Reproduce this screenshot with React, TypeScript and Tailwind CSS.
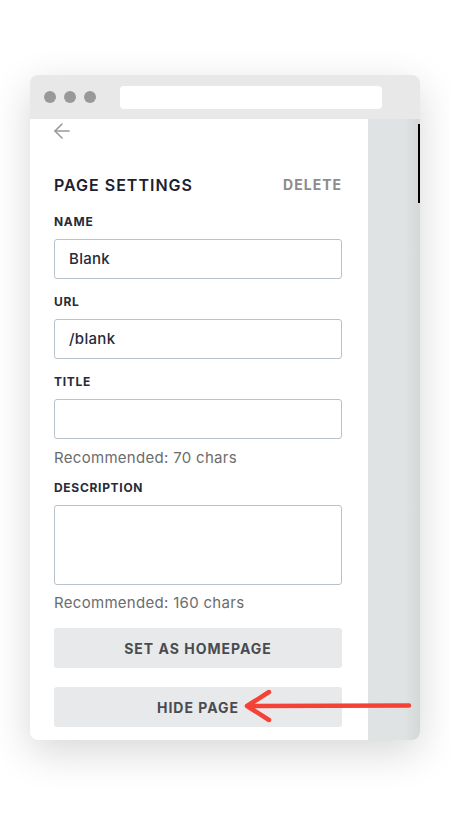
import { ArrowLeft } from "lucide-react";

const font = { fontFamily: "Inter, 'Noto Sans', sans-serif" };

function Field({ label, value, tall }: { label: string; value?: string; tall?: boolean }) {
  return (
    <div>
      <div className="text-[12px] leading-[16px] font-bold tracking-[0.7px] text-[#262b3a]">{label}</div>
      <div
        className={`mt-[9px] w-[288px] ${tall ? "h-[80px]" : "h-[40px]"} rounded-[3px] border border-[#b9c2cb] bg-white px-[14px] ${
          tall ? "" : "flex items-center"
        } text-[15px] font-medium tracking-[0.3px] text-[#262b3a]`}
      >
        {value}
      </div>
    </div>
  );
}

export default function App() {
  return (
    <div className="relative min-h-[815px] w-[450px] bg-white pt-[75px] pl-[30px]" style={font}>
      {/* Browser window */}
      <div className="w-[390px] overflow-hidden rounded-[8px] bg-white shadow-[0_12px_40px_rgba(0,0,0,0.16)]">
        {/* Top bar */}
        <div className="flex h-[44px] items-center bg-[#e8e8e8] px-[14px]">
          <div className="flex gap-[8px]">
            <span className="h-[12px] w-[12px] rounded-full bg-[#999]" />
            <span className="h-[12px] w-[12px] rounded-full bg-[#999]" />
            <span className="h-[12px] w-[12px] rounded-full bg-[#999]" />
          </div>
          <div className="ml-[24px] h-[23px] w-[262px] rounded-[4px] bg-white" />
        </div>

        <div className="flex">
          {/* Settings panel */}
          <div className="w-[338px] pl-[24px] pb-[13px]">
            <div className="-ml-[4px] h-[24px]">
              <ArrowLeft size={24} strokeWidth={1.6} className="text-[#999]" />
            </div>

            <div className="mt-[31px] flex w-[288px] items-center justify-between">
              <h1 className="text-[16px] leading-[20px] font-semibold tracking-[1px] text-[#1d2030]">PAGE SETTINGS</h1>
              <span className="text-[14px] font-bold tracking-[1px] text-[#8c8c8c]">DELETE</span>
            </div>

            <div className="mt-[19px]">
              <Field label="NAME" value="Blank" />
            </div>
            <div className="mt-[15px]">
              <Field label="URL" value="/blank" />
            </div>
            <div className="mt-[15px]">
              <Field label="TITLE" />
            </div>
            <p className="mt-[9px] text-[15px] leading-[20px] tracking-[0.3px] text-[#6c6c6c]">Recommended: 70 chars</p>
            <div className="mt-[12px]">
              <Field label="DESCRIPTION" tall />
            </div>
            <p className="mt-[8px] text-[15px] leading-[20px] tracking-[0.3px] text-[#6c6c6c]">Recommended: 160 chars</p>

            <button className="mt-[15px] flex h-[40px] w-[288px] items-center justify-center rounded-[3px] bg-[#e8e9ea] text-[14px] font-bold tracking-[1px] text-[#494b50]">
              SET AS HOMEPAGE
            </button>
            <button className="mt-[19px] flex h-[40px] w-[288px] items-center justify-center rounded-[3px] bg-[#e8e9ea] text-[14px] font-bold tracking-[1px] text-[#494b50]">
              HIDE PAGE
            </button>
          </div>

          {/* Canvas strip */}
          <div className="flex flex-1 bg-gradient-to-r from-[#e0e3e4] from-70% to-[#d5d8d9]">
            <div className="ml-auto mt-[5px] h-[79px] w-[2px] bg-black" />
          </div>
        </div>
      </div>

      {/* Red annotation arrow */}
      <svg
        className="absolute left-[240px] top-[688px]"
        width="176"
        height="38"
        viewBox="0 0 176 38"
        fill="none"
      >
        <path
          d="M169 17.5 L8 18 M29 4 L7 18 L29 32"
          stroke="#f44336"
          strokeWidth="4.5"
          strokeLinecap="round"
          strokeLinejoin="round"
        />
      </svg>
    </div>
  );
}
